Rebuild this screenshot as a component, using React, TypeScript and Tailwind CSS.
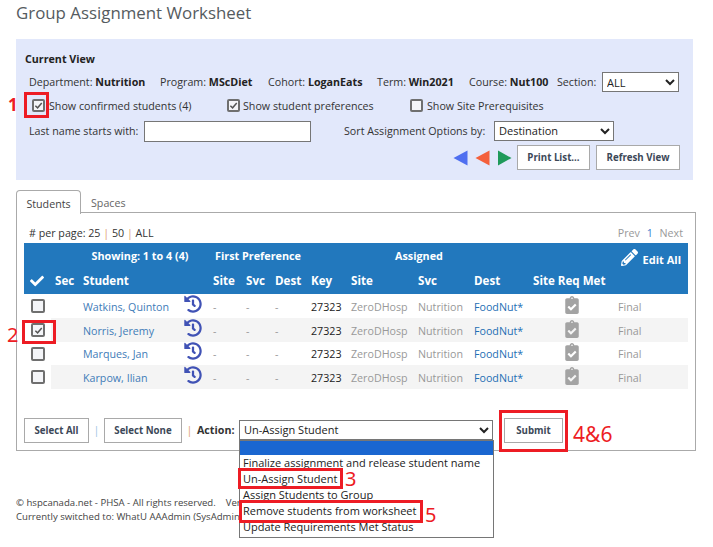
import React from "react";
import { FaHistory, FaClipboardCheck, FaCheck, FaPencilAlt } from "react-icons/fa";

const cols = "grid grid-cols-[27px_32px_130px_33px_29px_36px_40px_67px_56px_59px_85px_70px]";

function Box({ checked = false, size = "w-[13px] h-[13px]" }: { checked?: boolean; size?: string }) {
  return (
    <span className={`${size} shrink-0 inline-flex items-center justify-center border-2 border-[#6f6f6f] rounded-[2px] bg-[#f4f5f8]`}>
      {checked && (
        <svg viewBox="0 0 10 10" className="w-[9px] h-[9px]" fill="none" stroke="#555" strokeWidth="1.6">
          <path d="M1.5 5.2 L4 7.6 L8.6 2.2" />
        </svg>
      )}
    </span>
  );
}

function Btn({ children, className = "" }: { children: React.ReactNode; className?: string }) {
  return (
    <button className={`h-[25px] pt-[1px] border border-[#a9a9a9] bg-white text-[9.7px] font-bold text-[#3c4858] ${className}`}>
      {children}
    </button>
  );
}

function Tri({ color, flip = false }: { color: string; flip?: boolean }) {
  return (
    <svg viewBox="0 0 15 16" className="w-[15px] h-[16px]">
      <path d={flip ? "M1 0.5 L14.5 8 L1 15.5 Z" : "M14.5 0.5 L0.5 8 L14.5 15.5 Z"} fill={color} />
    </svg>
  );
}

const Mark = ({ className }: { className: string }) => (
  <div className={`absolute border-[3px] border-[#ed1c24] ${className}`} />
);
const Num = ({ className, children }: { className: string; children: React.ReactNode }) => (
  <div className={`absolute text-[#ed1c24] font-['Noto_Sans',sans-serif] leading-[14px] ${className}`}>{children}</div>
);

const students = [
  { name: "Watkins, Quinton", checked: false },
  { name: "Norris, Jeremy", checked: true },
  { name: "Marques, Jan", checked: false },
  { name: "Karpow, Ilian", checked: false },
];
const rowH = ["h-[24px]", "h-[24px]", "h-[23px]", "h-[24px]"];

export default function App() {
  return (
    <div className="relative w-[713px] h-[547px] overflow-hidden bg-white font-['Open_Sans',sans-serif] text-[10.7px] text-[#333]">
      <div className="px-4">
        <h1 className="h-[39px] pt-[1px] text-[16.85px] leading-[24px] text-[#555b60]">Group Assignment Worksheet</h1>

        <section className="w-[677px] h-[141px] bg-[#e2e8fb] pl-[9px] pt-[13px]">
          <div className="font-bold text-[#222] leading-[15px] h-[20px]">Current View</div>

          <div className="h-[20px] flex items-center pl-1 text-[#333]">
            <span className="w-[131px]">Department: <b className="text-[#222]">Nutrition</b></span>
            <span className="w-[108px]">Program: <b className="text-[#222]">MScDiet</b></span>
            <span className="w-[109px]">Cohort: <b className="text-[#222]">LoganEats</b></span>
            <span className="w-[92px]">Term: <b className="text-[#222]">Win2021</b></span>
            <span className="w-[88px]">Course: <b className="text-[#222]">Nut100</b></span>
            <span className="w-[45px]">Section:</span>
            <select className="w-[77px] h-[20px] border border-[#767676] bg-white text-[11px] text-[#222] pl-0">
              <option>ALL</option>
            </select>
          </div>

          <div className="h-[28px] flex items-center pl-[7px]">
            <label className="w-[195px] flex items-center gap-[4px]"><Box checked />Show confirmed students (4)</label>
            <label className="w-[183px] flex items-center gap-[3px]"><Box checked />Show student preferences</label>
            <label className="flex items-center gap-[4px]"><Box />Show Site Prerequisites</label>
          </div>

          <div className="h-[22px] flex items-center pl-1">
            <span className="w-[115px]">Last name starts with:</span>
            <input className="w-[167px] h-[21px] border border-[#767676] bg-white" />
            <span className="ml-[33px] w-[150px]">Sort Assignment Options by:</span>
            <select className="w-[120px] h-[20px] mt-[-1px] border border-[#767676] bg-white text-[11px] text-[#222]">
              <option>Destination</option>
            </select>
          </div>

          <div className="mt-[3px] flex items-center justify-end gap-[6px] pr-[13px]">
            <div className="flex items-center gap-[7px] mr-[-1px]">
              <Tri color="#4f6ff0" />
              <Tri color="#f4603c" />
              <Tri color="#1f9a5a" flip />
            </div>
            <Btn className="w-[73px]">Print List...</Btn>
            <Btn className="w-[84px]">Refresh View</Btn>
          </div>
        </section>

        <div className="mt-[10px] flex h-[24px] relative z-10">
          <div className="w-[65px] h-[24px] border border-b-0 border-[#aaa] rounded-t-[4px] bg-white text-center leading-[26px] text-[#444]">Students</div>
          <div className="ml-[10px] leading-[27px] text-[#666]">Spaces</div>
        </div>

        <section className="mt-[-2px] w-[680px] h-[239px] border border-[#aaa] px-[7px]">
          <div className="h-[30px] flex items-center justify-between pt-[11px] pl-[5px] pr-[5px]">
            <span className="text-[#333]">
              # per page: 25 <span className="text-[#e0a070]">|</span> 50 <span className="text-[#e0a070]">|</span> ALL
            </span>
            <span className="text-[#999]">Prev <span className="text-[#3d7fd0] mx-[4px]">1</span> Next</span>
          </div>

          <div className={`${cols} bg-[#2278bd] h-[51px] text-white font-bold`}>
            <div className="col-start-3 col-span-1 row-start-1 h-[25px] pt-[1px] flex items-center justify-center ml-[-16px] whitespace-nowrap text-[10.8px]">Showing: 1 to 4 (4)</div>
            <div className="col-start-4 col-span-3 row-start-1 h-[25px] pt-[1px] flex items-center justify-center pr-[8px] whitespace-nowrap text-[10.8px]">First Preference</div>
            <div className="col-start-8 col-span-3 row-start-1 h-[25px] pt-[1px] flex items-center pl-[44px] text-[10.8px]">Assigned</div>
            <div className="col-start-11 col-span-2 row-start-1 row-span-2 flex items-start justify-end pr-[7px] pt-[6px] gap-[5px]">
              <FaPencilAlt className="w-[17px] h-[17px]" />
              <span className="text-[11px] leading-[18px] mt-[2px]">Edit All</span>
            </div>
            {[
              ["col-start-1 pl-[6px]", null],
              ["col-start-2 pl-[4px]", "Sec"],
              ["col-start-3", "Student"],
              ["col-start-4", "Site"],
              ["col-start-5", "Svc"],
              ["col-start-6", "Dest"],
              ["col-start-7", "Key"],
              ["col-start-8", "Site"],
              ["col-start-9", "Svc"],
              ["col-start-10", "Dest"],
              ["col-start-11 whitespace-nowrap", "Site Req Met"],
            ].map(([c, t], i) => (
              <div key={i} className={`${c} row-start-2 h-[26px] flex items-center text-[11.6px]`}>
                {t ?? <FaCheck className="w-[14px] h-[14px]" />}
              </div>
            ))}
          </div>

          {students.map((s, i) => (
            <div key={s.name} className={`${cols} ${rowH[i]} items-stretch`}>
              <div className="flex items-center pl-[7px] bg-white"><Box checked={s.checked} size="w-[14px] h-[14px]" /></div>
              {[
                <div />,
                <div className="flex items-center justify-between pr-[11px]">
                  <span className="text-[#3f7cb8] pt-[2px]">{s.name}</span>
                  <FaHistory className="w-[18px] h-[18px] text-[#4052b5] mt-[-4px]" />
                </div>,
                <span className="text-[#999] pt-[2px]">-</span>,
                <span className="text-[#999] pt-[2px]">-</span>,
                <span className="text-[#999] pt-[2px]">-</span>,
                <span className="text-[#222] pt-[2px]">27323</span>,
                <span className="text-[#999] pt-[2px]">ZeroDHosp</span>,
                <span className="text-[#999] pt-[2px]">Nutrition</span>,
                <span className="text-[#1f6fb5] pt-[2px]">FoodNut*</span>,
                <span className="pl-[32px] pb-[3px]"><FaClipboardCheck className="w-[14px] h-[18px] text-[#a3a3a3]" /></span>,
                <span className="text-[#999] pt-[2px]">Final</span>,
              ].map((cell, j) => (
                <div key={j} className={`${i % 2 ? "bg-[#f4f4f4]" : "bg-white"} flex items-center ${j === 1 ? "[&>div]:w-full" : ""}`}>{cell}</div>
              ))}
            </div>
          ))}

          <div className="mt-[29px] flex items-center">
            <Btn className="w-[65px]">Select All</Btn>
            <span className="w-[15px] text-center text-[#9cc4e4]">|</span>
            <Btn className="w-[78px]">Select None</Btn>
            <span className="w-[15px] text-center text-[#e0a070]">|</span>
            <span className="font-bold text-[#333] w-[42px]">Action:</span>
            <select className="w-[254px] h-[20px] mt-[-2px] border border-[#767676] bg-white text-[11px] text-[#222]">
              <option>Un-Assign Student</option>
            </select>
            <Btn className="w-[59px] ml-[11px]">Submit</Btn>
          </div>
        </section>

        <footer className="mt-[45px] text-[9.6px] leading-[13.5px] text-[#444]">
          <div>© hspcanada.net - PHSA - All rights reserved. &nbsp;&nbsp; Version</div>
          <div>Currently switched to: WhatU AAAdmin (SysAdmin)</div>
        </footer>
      </div>

      <div className="absolute left-[239px] top-[440px] w-[255px] h-[98px] border border-[#767676] bg-white text-[11px] leading-[16px] text-[#222] pl-[3px]">
        <div className="h-[14px] -ml-[3px] bg-[#1a66d0]" />
        <div className="h-[16px]">Finalize assignment and release student name</div>
        <div className="h-[16px]">Un-Assign Student</div>
        <div className="h-[16px]">Assign Students to Group</div>
        <div className="h-[16px]">Remove students from worksheet</div>
        <div className="h-[16px]">Update Requirements Met Status</div>
      </div>

      <Mark className="left-[24px] top-[92px] w-[25px] h-[26px]" />
      <Mark className="left-[22px] top-[320px] w-[34px] h-[24px]" />
      <Mark className="left-[238px] top-[468px] w-[105px] h-[21px]" />
      <Mark className="left-[239px] top-[500px] w-[184px] h-[23px]" />
      <Mark className="left-[499px] top-[410px] w-[69px] h-[42px]" />
      <Num className="left-[8px] top-[98px] text-[17px] font-bold">1</Num>
      <Num className="left-[7px] top-[328px] text-[20px]">2</Num>
      <Num className="left-[345px] top-[472px] text-[20px]">3</Num>
      <Num className="left-[425px] top-[508px] text-[20px]">5</Num>
      <Num className="left-[573px] top-[427px] text-[21px]">4&amp;6</Num>
    </div>
  );
}
